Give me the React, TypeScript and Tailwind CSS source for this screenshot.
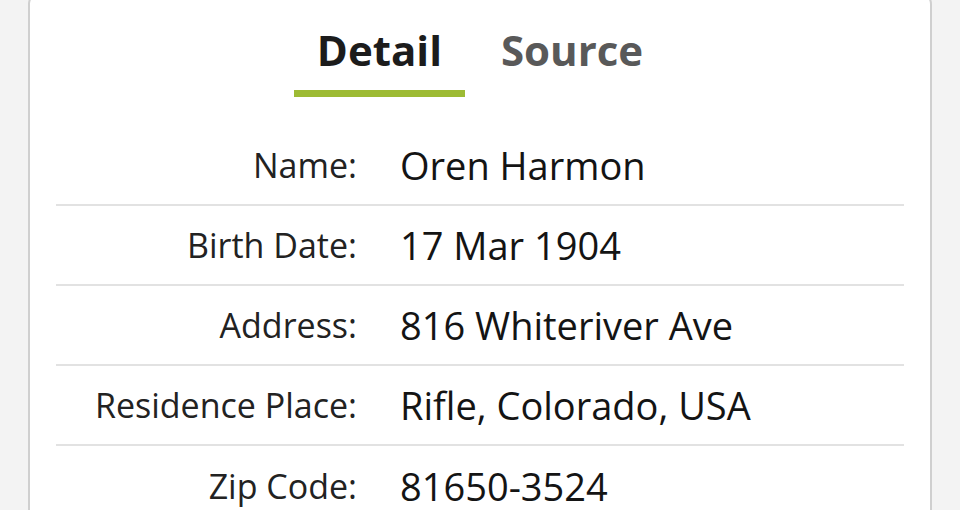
import React from 'react';

const rows: [string, string][] = [
  ['Name:', 'Oren Harmon'],
  ['Birth Date:', '17 Mar 1904'],
  ['Address:', '816 Whiteriver Ave'],
  ['Residence Place:', 'Rifle, Colorado, USA'],
  ['Zip Code:', '81650-3524'],
];

export default function App() {
  return (
    <div
      className="h-[510px] w-[960px] overflow-hidden bg-[#f3f3f3] px-[28px]"
      style={{ fontFamily: '"Open Sans", "Noto Sans", sans-serif' }}
    >
      <div className="-mt-2 h-[540px] rounded-xl border-2 border-[#cfcfcf] bg-white px-[26px]">
        {/* tabs */}
        <div className="flex justify-center gap-[13px] pt-[35px]">
          <button className="border-b-[7px] border-[#9dbb34] px-[23px] pb-[19px] text-[42px] font-bold leading-none text-[#1c1c1c]">
            Detail
          </button>
          <button className="border-b-[7px] border-transparent px-[23px] pb-[19px] text-[42px] font-bold leading-none text-[#595959]">
            Source
          </button>
        </div>

        {/* detail rows */}
        <div className="mt-[29px]">
          {rows.map(([label, value], i) => (
            <div
              key={label}
              className={`flex h-[80px] items-center ${i < rows.length - 1 ? 'border-b-2 border-[#e2e2e2]' : ''}`}
            >
              <div className="w-[301px] shrink-0 text-right text-[34px] text-[#222]">{label}</div>
              <div className="pl-[43px] text-[38px] text-[#141414]">{value}</div>
            </div>
          ))}
        </div>
      </div>
    </div>
  );
}
